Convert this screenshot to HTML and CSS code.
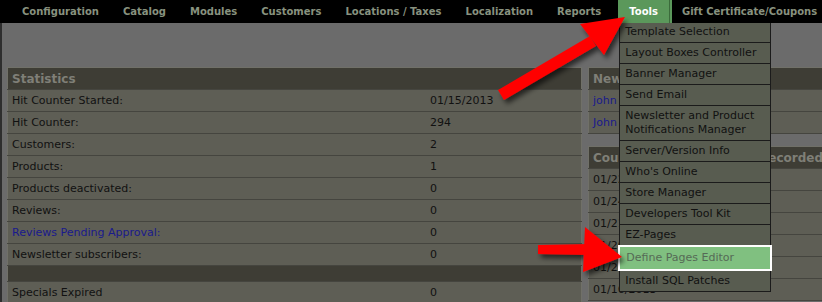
FILE: index.html
```html
<!DOCTYPE html>
<html lang="en">
<head>
    <meta charset="UTF-8">
    <title>Admin Home</title>
    <link rel="stylesheet" href="styles.css">
</head>
<body>

<!-- Top menu -->
<div class="top-nav">
    <div class="nav-item">Configuration</div>
    <div class="nav-item">Catalog</div>
    <div class="nav-item">Modules</div>
    <div class="nav-item">Customers</div>
    <div class="nav-item">Locations / Taxes</div>
    <div class="nav-item">Localization</div>
    <div class="nav-item">Reports</div>
    <div class="nav-item active">
        Tools
        <ul class="dropdown">
            <li>Template Selection</li>
            <li>Layout Boxes Controller</li>
            <li>Banner Manager</li>
            <li>Send Email</li>
            <li>Newsletter and Product Notifications Manager</li>
            <li>Server/Version Info</li>
            <li>Who's Online</li>
            <li>Store Manager</li>
            <li>Developers Tool Kit</li>
            <li>EZ-Pages</li>
            <li class="selected">Define Pages Editor</li>
            <li>Install SQL Patches</li>
        </ul>
    </div>
    <div class="nav-item">Gift Certificate/Coupons</div>
</div>

<div class="main">
    <div class="col-left">
        <table class="panel">
            <tr class="head"><td colspan="2">Statistics</td></tr>
            <tr><td>Hit Counter Started:</td><td>01/15/2013</td></tr>
            <tr><td>Hit Counter:</td><td>294</td></tr>
            <tr><td>Customers:</td><td>2</td></tr>
            <tr><td>Products:</td><td>1</td></tr>
            <tr><td>Products deactivated:</td><td>0</td></tr>
            <tr><td>Reviews:</td><td>0</td></tr>
            <tr><td><a href="#">Reviews Pending Approval:</a></td><td>0</td></tr>
            <tr><td>Newsletter subscribers:</td><td>0</td></tr>
            <tr class="spacer"><td colspan="2"></td></tr>
            <tr><td>Specials Expired</td><td>0</td></tr>
        </table>
    </div>

    <div class="col-right">
        <table class="panel">
            <tr class="head"><td>New Customers</td></tr>
            <tr><td><a href="#">john</a></td></tr>
            <tr><td><a href="#">John</a></td></tr>
        </table>

        <table class="panel history">
            <tr class="head"><td>Counter History</td><td class="recorded">Total Recorded</td></tr>
            <tr><td>01/22/2013</td><td></td></tr>
            <tr><td>01/24/2013</td><td></td></tr>
            <tr><td>01/21/2013</td><td></td></tr>
            <tr><td>01/20/2013</td><td></td></tr>
            <tr><td>01/23/2013</td><td></td></tr>
            <tr><td>01/16/2013</td><td></td></tr>
        </table>
    </div>
</div>

<!-- Red pointer arrows -->
<svg class="arrows" width="822" height="302" viewBox="0 0 822 302">
    <defs>
        <filter id="shadow" x="-20%" y="-20%" width="140%" height="140%">
            <feDropShadow dx="3" dy="4" stdDeviation="2.5" flood-color="#000" flood-opacity="0.6"/>
        </filter>
    </defs>
    <g fill="#ff0000" filter="url(#shadow)">
        <polygon points="498,90 590,36 596,46 504,100"/>
        <polygon points="580,24 625,17 604,55"/>
        <polygon points="538,245 590,244 590,255 538,254"/>
        <polygon points="585,227 622,257 583,272"/>
    </g>
</svg>

</body>
</html>
```

FILE: styles.css
```css
/* Global styles */
html, body {
    margin: 0;
    padding: 0;
    overflow: hidden;
}

body {
    width: 822px;
    height: 302px;
    background: #6b6b6b;
    font-family: 'DejaVu Sans', Verdana, sans-serif;
    font-size: 11px;
    color: #111;
    position: relative;
}

/* Top navigation */
.top-nav {
    display: flex;
    height: 23px;
    background: #000;
    padding-left: 10px;
}

.nav-item {
    position: relative;
    padding: 0 12px;
    line-height: 23px;
    font-size: 10px;
    font-weight: bold;
    color: #88927f;
    white-space: nowrap;
}

.nav-item.active {
    margin-left: 5px;
    padding: 0 14px 0 11px;
    background: #5b985b;
    color: #fff;
    box-shadow: inset -2px 0 0 #5b985b, inset -3px 0 0 #3b6b3b;
}

.nav-item.active + .nav-item {
    padding-left: 10px;
}

.dropdown {
    position: absolute;
    top: 23px;
    left: 1px;
    width: 150px;
    margin: 0;
    padding: 0;
    list-style: none;
    background: #585c50;
    border: 1px solid #1b1b1b;
    border-top: none;
    z-index: 2;
}

.dropdown li {
    padding: 3px 5px;
    line-height: 14px;
    font-size: 11px;
    font-weight: normal;
    color: #111;
    border-bottom: 1px solid #1b1b1b;
    white-space: normal;
}

.dropdown li:first-child {
    padding-top: 2px;
}

.dropdown li:last-child {
    border-bottom: none;
}

.dropdown li.selected {
    background: #80c080;
    color: #566a56;
    border: 2px solid #fff;
    margin: -1px -2px 0;
    padding: 4px 6px;
}

/* Content */
.main {
    display: flex;
    gap: 6px;
    padding: 44px 0 0 5px;
    border-left: 2px solid #2e2e2e;
    height: 279px;
    box-sizing: border-box;
}

.col-left {
    width: 575px;
    flex-shrink: 0;
}

.col-right {
    width: 240px;
    flex-shrink: 0;
    display: flex;
    flex-direction: column;
    gap: 12px;
}

.panel {
    width: 100%;
    border-collapse: collapse;
    background: #5e5e55;
    border: 1px solid #707068;
}

.panel td {
    height: 21px;
    padding: 0 4px;
    border-bottom: 1px solid #45453f;
    white-space: nowrap;
}

.panel td + td {
    width: 147px;
}

.panel .head td {
    background: #3e3d35;
    color: #7f7f77;
    font-weight: bold;
    font-size: 12px;
}

.panel .spacer td {
    height: 15px;
    background: #3e3d35;
}

.panel a {
    color: #1a1a8c;
    text-decoration: none;
}

.history td + td {
    width: auto;
}

.history .recorded {
    text-align: right;
}

.arrows {
    position: absolute;
    top: 0;
    left: 0;
    z-index: 3;
}
```
